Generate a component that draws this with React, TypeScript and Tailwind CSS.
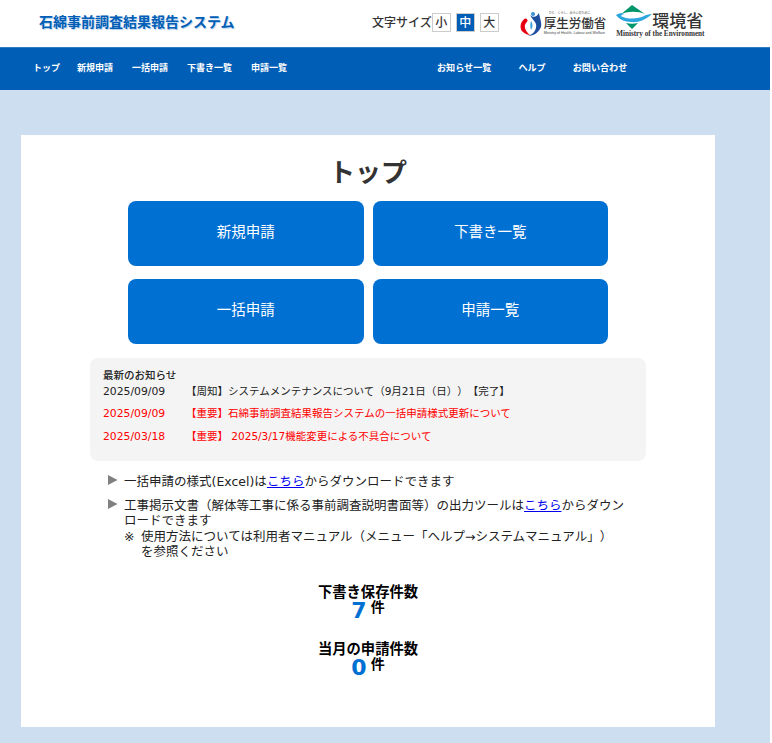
const FONT = "font-['DejaVu_Sans','Noto_Sans_CJK_JP',sans-serif]"

function MhlwLogo() {
  return (
    <div className="flex items-center">
      <svg width="22" height="24" viewBox="0 0 22 24">
        <path d="M5 7 C0 9 -1 17 3 20 C5 22 8 23 10 23 C6 20 3 15 6 11 C7 10 6 8 5 7 Z" fill="#e60012" />
        <circle cx="5.5" cy="8.5" r="2" fill="#e60012" />
        <path d="M10 3 C13 6 17 5 19 1 C20 7 22 11 21 15 C19 20 14 24 8 24 C14 22 17 17 16 12 C15 9 12 7 10 3 Z" fill="#1d4f9f" />
        <circle cx="13" cy="2" r="2" fill="#3a8fd0" />
        <path d="M11 9 C13 12 13 15 11 18 C10 15 10 12 11 9 Z" fill="#3aa0dc" />
      </svg>
      <div className="ml-[2px] flex flex-col items-start">
        <span className="text-[3px] leading-[5px] text-[#444] ml-[5px] whitespace-nowrap">ひと、くらし、みらいのために</span>
        <span className="text-[12.5px] leading-[15px] text-[#333] font-medium whitespace-nowrap">厚生労働省</span>
        <span className="text-[3.6px] leading-[5px] text-[#444] font-['Liberation_Sans',sans-serif] whitespace-nowrap">Ministry of Health, Labour and Welfare</span>
      </div>
    </div>
  )
}

function EnvLogo() {
  return (
    <div className="flex flex-col items-start ml-[10px] mb-[6px]">
      <div className="flex items-end h-[25px]">
        <svg width="36" height="25" viewBox="0 0 36 25">
          <path d="M16 1 L29 10 C22 7 10 7 4 11 Z" fill="#00956b" />
          <path d="M0 11 C3 9 6 9 8 10 C5 11 4 12 7 13 C14 16 24 14 28 12 C30 11 32 10 36 10 C30 15 24 19 15 18 C8 18 3 15 0 11 Z" fill="#2ca6df" />
          <path d="M10 19 C14 20 18 20 22 19 L16 25 Z" fill="#00956b" />
        </svg>
        <span className="mb-[-1px] text-[17px] leading-[17px] text-[#333] font-medium whitespace-nowrap">環境省</span>
      </div>
      <span className="mt-[1px] text-[7.2px] leading-[8px] font-bold text-[#333] font-['Liberation_Serif',serif] whitespace-nowrap">Ministry of the Environment</span>
    </div>
  )
}

const NAV_LEFT = ["トップ", "新規申請", "一括申請", "下書き一覧", "申請一覧"]
const NAV_RIGHT = ["お知らせ一覧", "ヘルプ", "お問い合わせ"]

function Arrow() {
  return (
    <svg width="10" height="10" viewBox="0 0 10 10" className="shrink-0 mr-[6px] mt-[1px]">
      <polygon points="0,0 9.5,5 0,10" fill="#808080" />
    </svg>
  )
}

export default function App() {
  return (
    <div className={`w-[770px] min-h-[743px] bg-[#ccdef0] [text-spacing-trim:space-all] ${FONT}`}>
      {/* Header */}
      <header className="h-[47px] bg-white flex items-center pl-[39px]">
        <h1 className="text-[14px] mb-[3px] font-bold text-[#005eb6] w-[333px] whitespace-nowrap [text-shadow:1px_1px_1px_rgba(0,94,182,0.3)]">石綿事前調査結果報告システム</h1>
        <div className="flex items-center mb-[2px] text-[12px] font-medium text-[#333]">
          <span>文字サイズ</span>
          <button className="w-[19px] h-[19px] border border-[#ccc] bg-white text-[12px] leading-none">小</button>
          <button className="w-[19px] h-[19px] ml-[5px] border border-[#ccc] bg-[#005eb6] text-white text-[12px] leading-none">中</button>
          <button className="w-[19px] h-[19px] ml-[5px] border border-[#ccc] bg-white text-[12px] leading-none">大</button>
        </div>
        <div className="flex items-center ml-[21px]">
          <MhlwLogo />
          <EnvLogo />
        </div>
      </header>

      {/* Nav */}
      <nav className="h-[43px] bg-[#005eb6] border-t border-[#2f7cc6] flex items-center text-white font-bold">
        <div className="flex gap-[19px] pl-[33px] w-[437px] text-[9px] whitespace-nowrap">
          {NAV_LEFT.map((label, i) => (
            <span key={label} className={i === 0 ? "mr-[-2px]" : ""}>{label}</span>
          ))}
        </div>
        <div className="flex gap-[27px] text-[9.1px] whitespace-nowrap">
          {NAV_RIGHT.map((label) => (
            <span key={label}>{label}</span>
          ))}
        </div>
      </nav>

      {/* Card */}
      <main className="ml-[21px] mt-[45px] w-[694px] h-[592px] bg-white pt-[20px]">
        <h2 className="text-[26px] leading-[37px] font-bold text-[#333] text-center">トップ</h2>

        <div className="mt-[9px] ml-[107px] w-[480px] grid grid-cols-2 gap-x-[9px] gap-y-[13px]">
          {["新規申請", "下書き一覧", "一括申請", "申請一覧"].map((label) => (
            <button key={label} className="h-[65px] pb-[2px] rounded-lg bg-[#0070d2] text-white text-[14.5px]">
              {label}
            </button>
          ))}
        </div>

        {/* News */}
        <section className="mt-[14px] ml-[69px] w-[556px] h-[103px] rounded-lg bg-[#f4f4f4] px-[13px] pt-[9px] text-[10.5px] text-[#222]">
          <p className="font-medium leading-[16px]">最新のお知らせ</p>
          <div className="flex items-baseline leading-[16px]">
            <span className="w-[83px] text-[10.8px]">2025/09/09</span>
            <span>【周知】システムメンテナンスについて（9月21日（日））【完了】</span>
          </div>
          <div className="flex items-baseline leading-[16px] mt-[5px] text-[#ff0000]">
            <span className="w-[83px] text-[10.8px]">2025/09/09</span>
            <span>【重要】石綿事前調査結果報告システムの一括申請様式更新について</span>
          </div>
          <div className="flex items-baseline leading-[16px] mt-[6px] text-[#ff0000]">
            <span className="w-[83px] text-[10.8px]">2025/03/18</span>
            <span>【重要】 2025/3/17機能変更による不具合について</span>
          </div>
        </section>

        {/* Guide */}
        <ul className="mt-[13px] ml-[87px] w-[519px] text-[12.5px] leading-[15.5px] text-[#222]">
          <li className="flex">
            <Arrow />
            <p>一括申請の様式(Excel)は<a href="#" className="text-[#0000ee] underline">こちら</a>からダウンロードできます</p>
          </li>
          <li className="flex mt-[8px]">
            <Arrow />
            <div>
              <p>工事掲示文書（解体等工事に係る事前調査説明書面等）の出力ツールは<a href="#" className="text-[#0000ee] underline">こちら</a>からダウンロードできます</p>
              <div className="flex">
                <span className="w-[17px] shrink-0">※</span>
                <p className="w-[476px]">使用方法については利用者マニュアル（メニュー「ヘルプ→システムマニュアル」）を参照ください</p>
              </div>
            </div>
          </li>
        </ul>

        {/* Counts */}
        <div className="mt-[24px] flex flex-col items-center text-black font-bold">
          <p className="text-[14.3px] leading-[16px]">下書き保存件数</p>
          <p className="flex items-start leading-none h-[24px] -mt-[1px]">
            <span className="text-[22px] leading-[24px] text-[#0070d2]">7</span>
            <span className="text-[14px] leading-[14px] ml-[4px] mt-[1px]">件</span>
          </p>
          <p className="mt-[18px] text-[14.3px] leading-[16px]">当月の申請件数</p>
          <p className="flex items-start leading-none h-[24px] -mt-[1px]">
            <span className="text-[22px] leading-[24px] text-[#0070d2]">0</span>
            <span className="text-[14px] leading-[14px] ml-[4px] mt-[1px]">件</span>
          </p>
        </div>
      </main>
    </div>
  )
}
